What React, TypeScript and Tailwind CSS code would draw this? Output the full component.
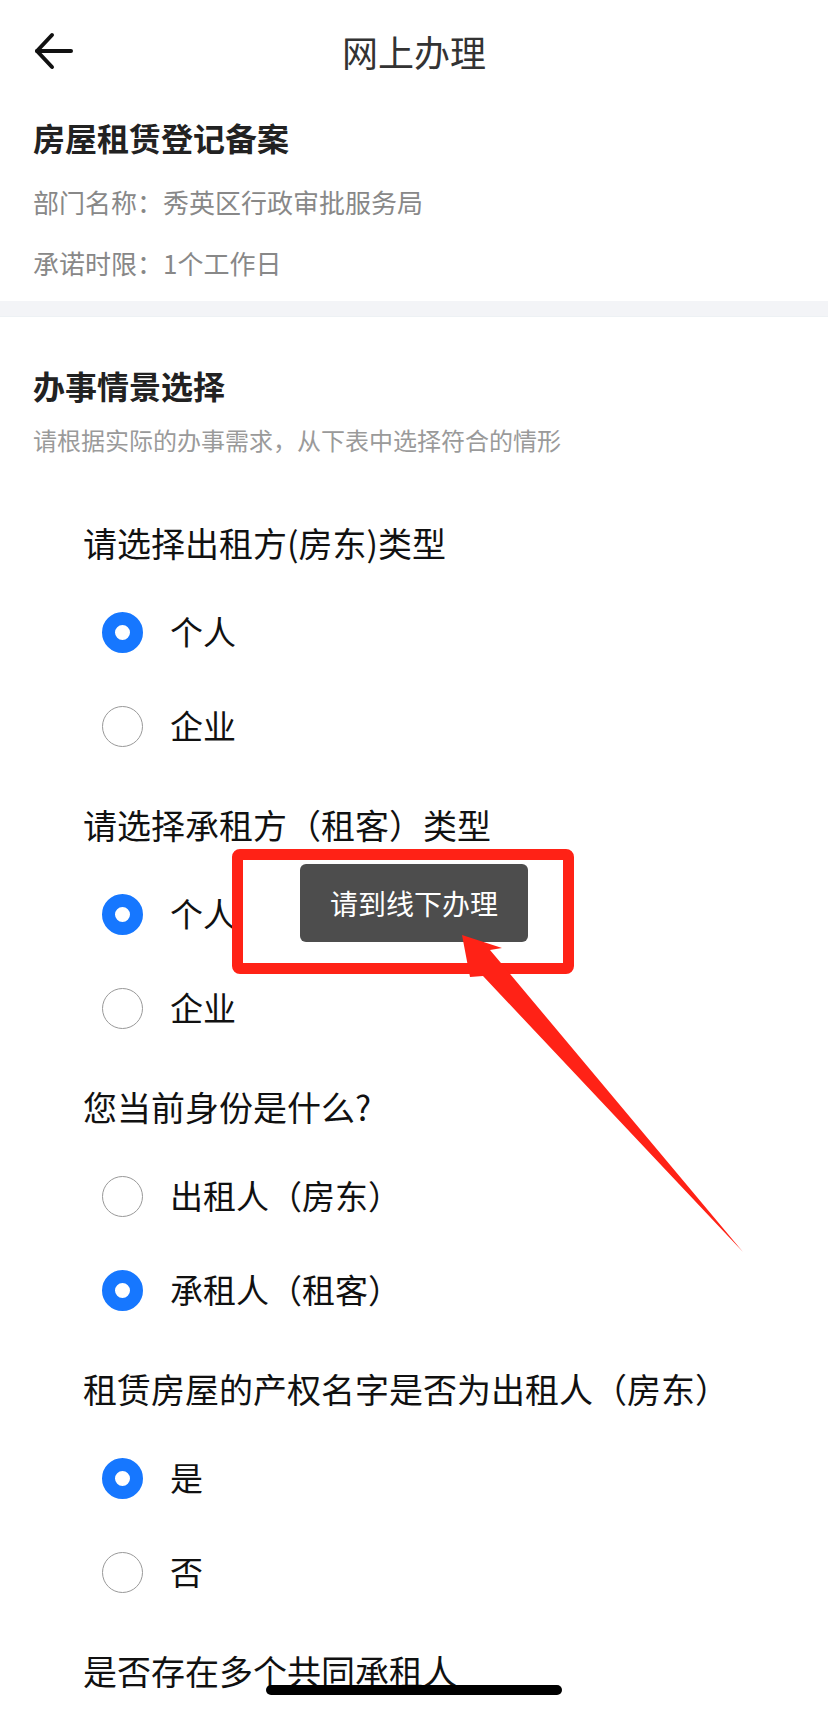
const font = { fontFamily: '"Noto Sans CJK SC", "Noto Sans", sans-serif' };

type Question = {
  title: string;
  options: { label: string; checked: boolean }[];
};

const questions: Question[] = [
  {
    title: "请选择出租方(房东)类型",
    options: [
      { label: "个人", checked: true },
      { label: "企业", checked: false },
    ],
  },
  {
    title: "请选择承租方（租客）类型",
    options: [
      { label: "个人", checked: true },
      { label: "企业", checked: false },
    ],
  },
  {
    title: "您当前身份是什么?",
    options: [
      { label: "出租人（房东）", checked: false },
      { label: "承租人（租客）", checked: true },
    ],
  },
  {
    title: "租赁房屋的产权名字是否为出租人（房东）",
    options: [
      { label: "是", checked: true },
      { label: "否", checked: false },
    ],
  },
];

function Radio({ checked }: { checked: boolean }) {
  return checked ? (
    <span className="block w-[41px] h-[41px] rounded-full border-[13px] border-[#1677ff] bg-white shrink-0" />
  ) : (
    <span className="block w-[41px] h-[41px] rounded-full border-[1.5px] border-[#999999] bg-white shrink-0" />
  );
}

function QuestionBlock({ q }: { q: Question }) {
  return (
    <div className="pb-[8px]">
      <div className="h-[86px] flex items-center text-[34px] text-[#111111]">
        {q.title}
      </div>
      {q.options.map((o, i) => (
        <div key={i} className="h-[94px] flex items-center pl-[19px] gap-[27px]">
          <Radio checked={o.checked} />
          <span className="text-[33px] text-[#111111]">{o.label}</span>
        </div>
      ))}
    </div>
  );
}

export default function App() {
  return (
    <div
      className="relative w-[828px] h-[1711px] overflow-hidden bg-white"
      style={font}
    >
      {/* header */}
      <div className="relative h-[102px] flex items-center justify-center">
        <svg
          className="absolute left-[30px] top-[30px]"
          width="48"
          height="42"
          viewBox="0 0 48 42"
          fill="none"
          stroke="#111111"
          strokeWidth="4"
          strokeLinecap="round"
          strokeLinejoin="round"
        >
          <path d="M22 5 L7 21 L22 37" />
          <path d="M7 21 H41" />
        </svg>
        <span className="text-[36px] text-[#333333]">网上办理</span>
      </div>

      {/* info */}
      <div className="px-[33px] pt-[13px] pb-[18px]">
        <div className="leading-[44px] text-[32px] font-bold text-[#222222]">
          房屋租赁登记备案
        </div>
        <div className="mt-[23px] leading-[40px] text-[26px] text-[#888888]">
          部门名称：秀英区行政审批服务局
        </div>
        <div className="mt-[21px] leading-[40px] text-[26px] text-[#888888]">
          承诺时限：1个工作日
        </div>
      </div>
      <div className="h-[16px] bg-[#f3f4f7] border-b border-[#edf1f4]" />

      {/* section */}
      <div className="px-[33px]">
        <div className="mt-[46px] leading-[44px] text-[32px] font-bold text-[#222222]">
          办事情景选择
        </div>
        <div className="mt-[16px] leading-[34px] text-[24px] text-[#9a9a9a]">
          请根据实际的办事需求，从下表中选择符合的情形
        </div>
      </div>

      <div className="mt-[42px] pl-[83px]">
        {questions.map((q, i) => (
          <QuestionBlock key={i} q={q} />
        ))}
        <div className="h-[86px] flex items-center text-[34px] text-[#111111]">
          是否存在多个共同承租人
        </div>
      </div>

      {/* annotation: red frame */}
      <div className="absolute left-[232px] top-[849px] w-[342px] h-[125px] border-[11px] border-[#ff2216] rounded-[8px]" />

      {/* toast */}
      <div className="absolute left-[300px] top-[864px] w-[228px] h-[78px] rounded-[6px] bg-[#4d4d4d] flex items-center justify-center">
        <span className="text-[28px] text-white">请到线下办理</span>
      </div>

      {/* annotation: red arrow */}
      <svg
        className="absolute left-0 top-0 pointer-events-none"
        width="828"
        height="1711"
        viewBox="0 0 828 1711"
      >
        <polygon
          points="462,935 502,948 490,950 743,1252 483,976 470,977"
          fill="#ff2216"
        />
      </svg>

      {/* home indicator */}
      <div className="absolute left-[266px] top-[1685px] w-[296px] h-[10px] rounded-full bg-black" />
    </div>
  );
}
